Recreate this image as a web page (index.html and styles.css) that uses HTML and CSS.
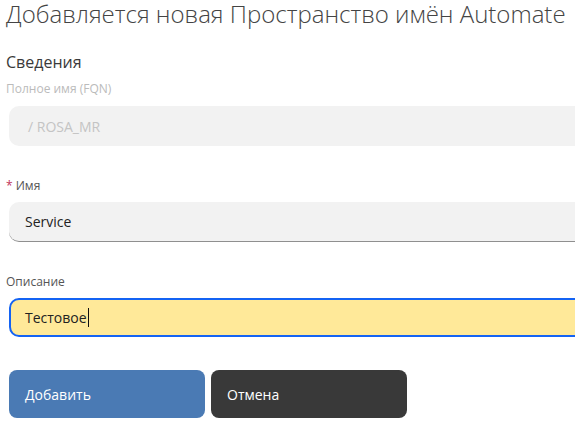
FILE: index.html
```html
<!DOCTYPE html>
<html lang="ru">
<head>
<meta charset="utf-8">
<link rel="stylesheet" href="styles.css">
</head>
<body>
<div class="page">
  <h1 class="title">Добавляется новая Пространство имён Automate</h1>
  <h2 class="section">Сведения</h2>
  <div class="field">
    <div class="label muted">Полное имя (FQN)</div>
    <div class="input disabled">/ ROSA_MR</div>
  </div>
  <div class="field">
    <div class="label"><span class="req">*</span> Имя</div>
    <div class="input filled">Service</div>
  </div>
  <div class="field">
    <div class="label">Описание</div>
    <div class="input focused">Тестовое<span class="caret"></span></div>
  </div>
  <div class="actions">
    <button class="btn primary">Добавить</button>
    <button class="btn dark">Отмена</button>
  </div>
</div>
</body>
</html>
```
FILE: styles.css
```css
html, body {
  margin: 0;
  padding: 0;
  background: #ffffff;
  overflow: hidden;
}
body {
  font-family: "Open Sans", "Noto Sans", sans-serif;
  color: #333;
}
.page {
  padding: 0 0 0 6px;
}
.title {
  margin: 0;
  font-size: 24px;
  font-weight: 300;
  line-height: 28px;
  color: #444;
  white-space: nowrap;
}
.section {
  margin: 23px 0 0 0;
  font-size: 16px;
  font-weight: 400;
  line-height: 22px;
  color: #3a3a3a;
}
.field {
  display: flex;
  flex-direction: column;
}
.label {
  font-size: 12px;
  line-height: 16px;
  color: #555;
  margin-bottom: 8px;
}
.label.muted {
  color: #bbb;
  margin-top: 8px;
  margin-bottom: 9px;
}
.req {
  color: #c0325a;
}
.field + .field {
  margin-top: 32px;
}
.input {
  margin-left: 3px;
  width: 620px;
  height: 40px;
  box-sizing: border-box;
  border-radius: 10px;
  background: #f2f2f2;
  display: flex;
  align-items: center;
  padding-left: 16px;
  font-size: 14px;
}
.input.disabled {
  color: #c4c4c4;
  padding-left: 19px;
}
.input.filled {
  color: #222;
  border-bottom: 1px solid #8f8f8f;
}
.input.focused {
  background: #ffe999;
  border: 2px solid #1463f3;
  padding-left: 14px;
  height: 39px;
  color: #222;
}
.caret {
  display: inline-block;
  width: 1px;
  height: 19px;
  background: #111;
  margin-left: 1px;
}
.actions {
  display: flex;
  gap: 6px;
  margin: 33px 0 0 3px;
}
.btn {
  width: 196px;
  height: 48px;
  border: none;
  border-radius: 8px;
  color: #fff;
  font-family: "Open Sans", "Noto Sans", sans-serif;
  font-size: 14px;
  text-align: left;
  padding: 0 0 0 16px;
}
.btn.primary {
  background: #4a7ab4;
}
.btn.dark {
  background: #393939;
}
```
